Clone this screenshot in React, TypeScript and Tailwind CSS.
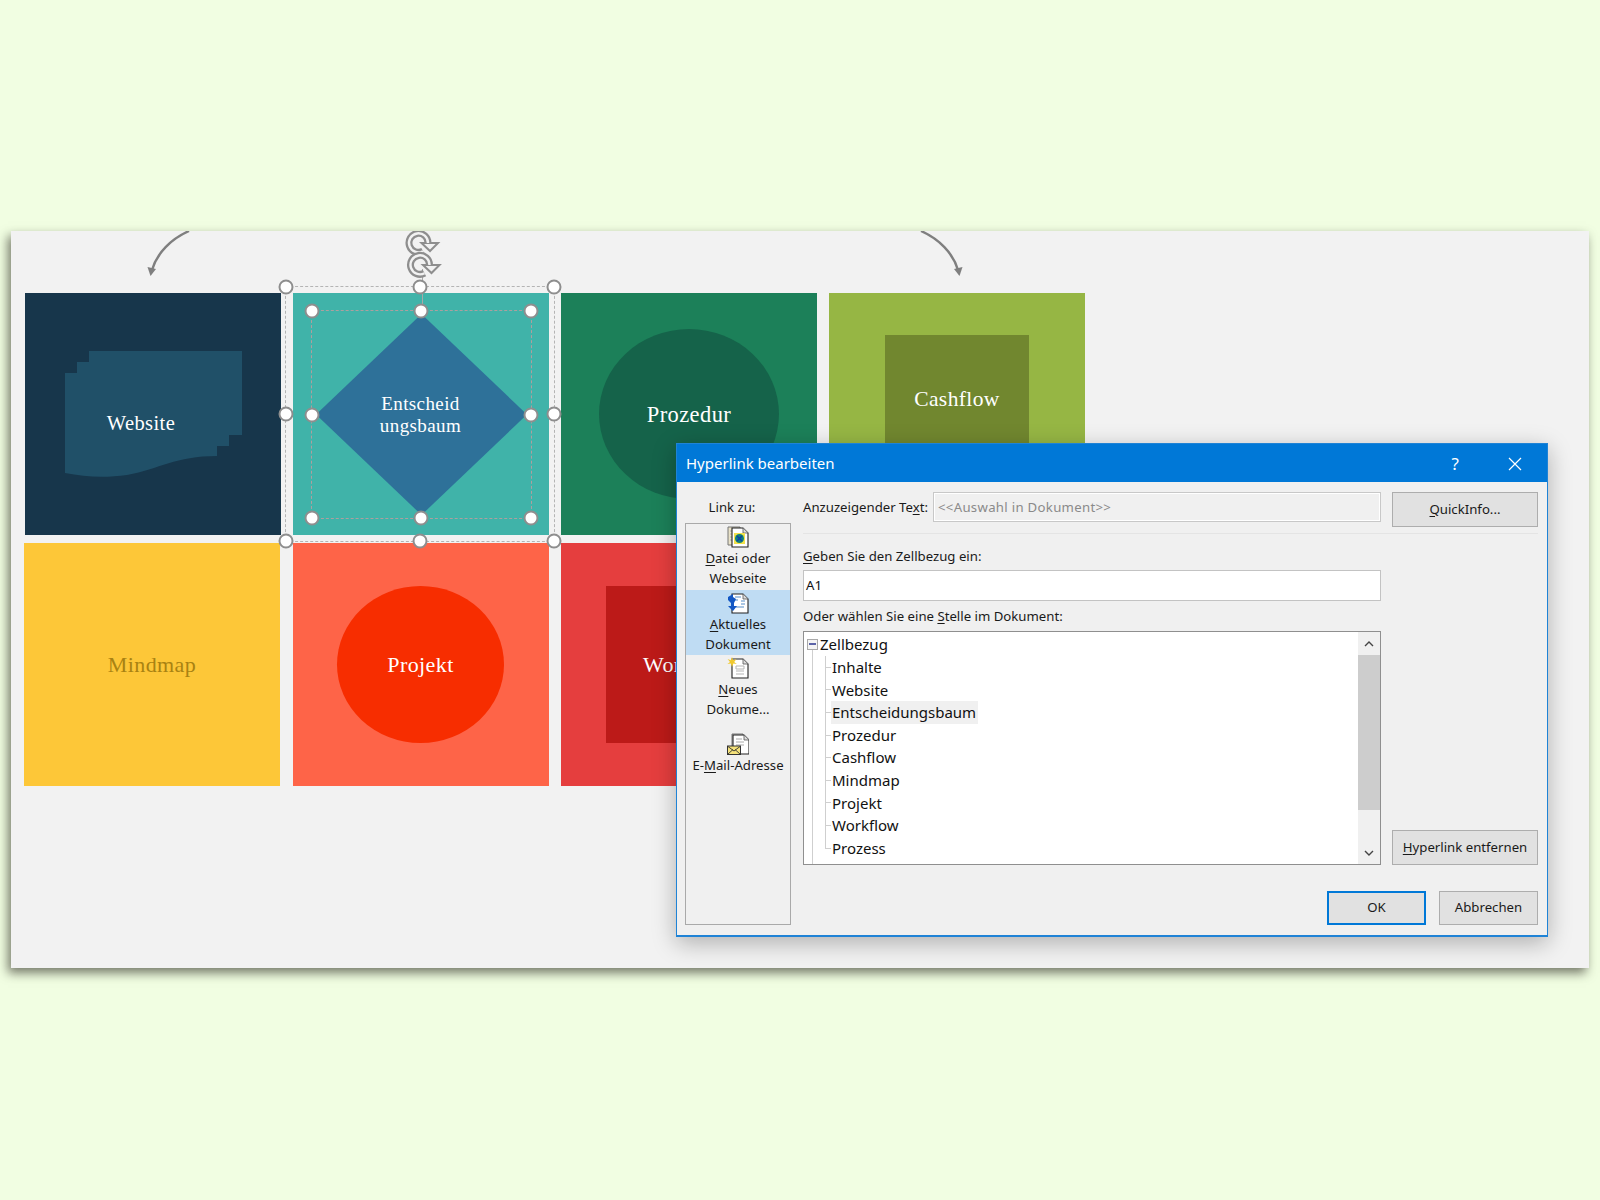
import type { ReactNode } from 'react';

const uiFont = "font-['Noto_Sans','Open_Sans',sans-serif]";
const serif = "font-['Liberation_Serif',serif] tracking-[0.4px]";
const tileText = `${serif} text-[22px] leading-[22px]`;

const HANDLE_SPOTS = [
  'left-0 top-0', 'left-1/2 top-0', 'left-full top-0',
  'left-0 top-1/2', 'left-full top-1/2',
  'left-0 top-full', 'left-1/2 top-full', 'left-full top-full',
];

function SelectionBox({ className }: { className: string }) {
  return (
    <div className={`absolute border border-dashed ${className}`}>
      {HANDLE_SPOTS.map((spot) => (
        <div
          key={spot}
          className={`absolute h-[15px] w-[15px] -translate-x-1/2 -translate-y-1/2 rounded-full border-[2.5px] border-[#8e8e8e] bg-white ${spot}`}
        />
      ))}
    </div>
  );
}

function RotateIcon({ cx, cy }: { cx: number; cy: number }) {
  const arc = `M${cx + 4.5} ${cy + 8.2}A9.5 9.5 0 1 1 ${cx + 9.5} ${cy}`;
  const head = `M${cx + 3} ${cy}H${cx + 19.500}L${cx + 11.500} ${cy + 8}Z`;
  return (
    <g fill="none">
      <path d={arc} stroke="#8e8e8e" strokeWidth="7" />
      <path d={head} fill="#f2f2f2" stroke="#8e8e8e" strokeWidth="2" />
      <path d={arc} stroke="#f2f2f2" strokeWidth="2.4" />
    </g>
  );
}

function CurvedArrow({ className, d, head }: { className: string; d: string; head: string }) {
  return (
    <svg className={`absolute ${className}`} width="48" height="50" viewBox="0 0 48 50">
      <path d={d} fill="none" stroke="#7f7f7f" strokeWidth="2.4" />
      <path d={head} fill="#7f7f7f" />
    </svg>
  );
}

function Tile({ className, children }: { className: string; children?: ReactNode }) {
  return <div className={`relative h-full w-[256px] shrink-0 ${className}`}>{children}</div>;
}

function Mn({ children }: { children: ReactNode }) {
  return <span className="underline underline-offset-2">{children}</span>;
}

function Btn({ className = 'border border-[#adadad]', children }: { className?: string; children: ReactNode }) {
  return (
    <button className={`flex items-center justify-center bg-[#e1e1e1] text-[13.2px] text-[#1a1a1a] ${className}`}>
      {children}
    </button>
  );
}

function PageShape({ x = 5 }: { x?: number }) {
  return (
    <>
      <path d={`M${x} 2h11l5 5v14H${x}z`} fill="#fff" stroke="#222" strokeWidth="1.1" />
      <path d={`M${x + 11} 2v5h5`} fill="#ddd" stroke="#555" strokeWidth="0.8" />
    </>
  );
}

function FileIcon() {
  return (
    <svg width="22" height="22" viewBox="0 0 22 22">
      <path d="M1 1h12v18H1z" fill="#e9e2c8" stroke="#777" strokeWidth="1" />
      <path d="M3 5h8M3 8h8M3 11h8M3 14h8" stroke="#aaa" strokeWidth="1" />
      <PageShape />
      <rect x="7" y="7" width="11" height="11" fill="#f3e24a" />
      <circle cx="12.5" cy="12.5" r="4.5" fill="#0f7f7a" />
      <path d="M10 10l5 5M15 10l-5 5" stroke="#0b3fa8" strokeWidth="1.4" />
    </svg>
  );
}

function CurrentDocIcon() {
  return (
    <svg width="22" height="22" viewBox="0 0 22 22">
      <PageShape />
      <path d="M8 5h6M8 8h3M14 9h4M14 12h4M9 15h8" stroke="#8db4dc" strokeWidth="1.4" />
      <path d="M1 5l5-3v3l3 2-2 4v3l3 0-4 5-5-5h3v-3L1 8z" fill="#1257c4" />
    </svg>
  );
}

function NewDocIcon() {
  return (
    <svg width="22" height="22" viewBox="0 0 22 22">
      <PageShape />
      <path d="M9 9h8v3H9zM9 14h8M9 17h8" fill="none" stroke="#b5b5b5" strokeWidth="1" />
      <path d="M5 0l1.2 3.200L9.500 2 7.200 5l2.600 2-3.400-.4L5 10 3.800 6.600.4 7l2.600-2L.6 2l3.200 1.200z" fill="#f0c92f" />
    </svg>
  );
}

function MailIcon() {
  return (
    <svg width="22" height="22" viewBox="0 0 22 22">
      <path d="M5 1h11v16H5z" fill="#eee" stroke="#777" strokeWidth="1" />
      <PageShape x={6} />
      <path d="M9 6h6M9 9h8M9 12h8" stroke="#aaa" strokeWidth="1" />
      <rect x="0.5" y="13" width="13" height="8.5" fill="#f5e27a" stroke="#333" strokeWidth="1" />
      <path d="M1 13.500l6 4.500 6-4.500M1 21l5-4.500M13 21l-5-4.500" fill="none" stroke="#333" strokeWidth="0.9" />
    </svg>
  );
}

function LinkItem({ icon, selected, single, lines }: { icon: ReactNode; selected?: boolean; single?: boolean; lines: ReactNode[] }) {
  return (
    <div className={`flex h-[65.5px] flex-col items-center ${single ? 'pt-[12px]' : 'pt-[2px]'} ${selected ? 'bg-[#bfdcf3]' : ''}`}>
      {icon}
      <div className="text-center text-[13.2px] leading-[20px] text-[#1a1a1a]">
        {lines.map((line, i) => <div key={i}>{line}</div>)}
      </div>
    </div>
  );
}

const TREE_ITEMS = ['Inhalte', 'Website', 'Entscheidungsbaum', 'Prozedur', 'Cashflow', 'Mindmap', 'Projekt', 'Workflow', 'Prozess'];

function DocTree() {
  return (
    <div className="relative flex h-[234px] w-[578px] border border-[#8f8f8f] bg-white">
      <div className="absolute left-[8px] top-[18px] bottom-0 w-px bg-[#cfcfcf]" />
      <div className="min-w-0 flex-1 pl-[3px] text-[15px] leading-[22.6px] text-[#111]">
        <div className="flex h-[24px] items-center">
          <span className="mr-[2px] flex h-[11px] w-[11px] items-center justify-center border border-[#a9a9a9] bg-[#f4f4f4]">
            <span className="h-[2px] w-[7px] bg-[#5c64a8]" />
          </span>
          <span>Zellbezug</span>
        </div>
        <div className="relative ml-[18px]">
          <div className="absolute left-0 top-0 bottom-[11px] w-px bg-[#cfcfcf]" />
          {TREE_ITEMS.map((item) => (
            <div key={item} className="flex h-[22.6px] items-center">
              <span className="h-px w-[6px] shrink-0 bg-[#cfcfcf]" />
              <span className={item === 'Entscheidungsbaum' ? 'bg-[#f0f0f0] pl-px pr-[2px]' : 'pl-px'}>{item}</span>
            </div>
          ))}
        </div>
      </div>
      <div className="flex w-[22px] shrink-0 flex-col bg-[#f0f0f0]">
        <div className="flex h-[23px] items-center justify-center">
          <svg width="10" height="6" viewBox="0 0 10 6"><path d="M1 5l4-4 4 4" fill="none" stroke="#444" strokeWidth="1.4" /></svg>
        </div>
        <div className="h-[155px] bg-[#cdcdcd]" />
        <div className="mt-auto flex h-[23px] items-center justify-center">
          <svg width="10" height="6" viewBox="0 0 10 6"><path d="M1 1l4 4 4-4" fill="none" stroke="#444" strokeWidth="1.4" /></svg>
        </div>
      </div>
    </div>
  );
}

function HyperlinkDialog() {
  return (
    <div className={`absolute left-[665px] top-[212px] z-20 flex h-[494px] w-[872px] flex-col border border-b-2 border-[#1f83d6] bg-[#f0f0f0] shadow-[0_6px_22px_rgba(0,0,0,0.28)] ${uiFont}`}>
      <div className="flex h-[38px] shrink-0 items-center bg-[#0078d7] pl-[9px] pt-px text-white">
        <span className="text-[15px]">Hyperlink bearbeiten</span>
        <span className="ml-auto text-[17px]">?</span>
        <svg className="ml-[49px] mr-[25px]" width="14" height="14" viewBox="0 0 14 14">
          <path d="M1 1l12 12M13 1L1 13" stroke="#fff" strokeWidth="1.2" />
        </svg>
      </div>
      <div className="flex min-h-0 flex-1 pl-[8px] pr-[9px] pt-[10px]">
        <div className="flex w-[106px] shrink-0 flex-col">
          <div className="flex h-[31px] shrink-0 items-start justify-center pr-[12px] pt-[5px] text-[13.2px] leading-[20px] text-[#1a1a1a]">Link zu:</div>
          <div className="h-[402px] border border-[#a9a9a9] bg-[#f0f0f0]">
            <LinkItem icon={<FileIcon />} lines={[<><Mn>D</Mn>atei oder</>, 'Webseite']} />
            <LinkItem icon={<CurrentDocIcon />} selected lines={[<><Mn>A</Mn>ktuelles</>, 'Dokument']} />
            <LinkItem icon={<NewDocIcon />} lines={[<><Mn>N</Mn>eues</>, 'Dokume...']} />
            <LinkItem icon={<MailIcon />} single lines={[<>E-<Mn>M</Mn>ail-Adresse</>]} />
          </div>
        </div>
        <div className="ml-[12px] flex min-w-0 flex-1 flex-col">
          <div className="flex h-[35px] shrink-0 items-start">
            <div className="flex w-[578px] items-start">
              <span className="w-[130px] shrink-0 whitespace-nowrap pt-[5px] text-[13.2px] leading-[20px] text-[#1a1a1a]">Anzuzeigender Te<Mn>x</Mn>t:</span>
              <div className="flex h-[30px] flex-1 items-center border border-[#c8c8c8] bg-[#f0f0f0] pl-[4px] pt-px text-[13.2px] tracking-[0.3px] text-[#8a8a8a] shadow-[inset_0_0_0_1px_#fff]">
                {'<<Auswahl in Dokument>>'}
              </div>
            </div>
            <Btn className="ml-[11px] h-[35px] w-[146px] border border-[#adadad]"><span><Mn>Q</Mn>uickInfo...</span></Btn>
          </div>
          <div className="mt-[6px] h-px shrink-0 bg-[#e4e4e4]" />
          <div className="flex min-h-0 flex-1">
            <div className="w-[578px] shrink-0">
              <div className="mt-[12px] text-[13.2px] leading-[20px] text-[#1a1a1a]"><Mn>G</Mn>eben Sie den Zellbezug ein:</div>
              <div className="mt-[4px] flex h-[31px] items-center border border-[#c3c3c3] bg-white pl-[2px] text-[13.2px] text-[#111]">A1</div>
              <div className="mt-[5px] text-[13.2px] leading-[20px] text-[#1a1a1a]">Oder wählen Sie eine <Mn>S</Mn>telle im Dokument:</div>
              <div className="mt-[5px]"><DocTree /></div>
            </div>
            <div className="ml-[11px] flex h-[331px] w-[146px] shrink-0 items-end">
              <Btn className="h-[35px] w-full border border-[#adadad]"><span><Mn>H</Mn>yperlink entfernen</span></Btn>
            </div>
          </div>
          <div className="mb-[10px] flex shrink-0 justify-end gap-[13px]">
            <Btn className="h-[34px] w-[99px] border-2 border-[#0078d7]">OK</Btn>
            <Btn className="h-[34px] w-[99px] border border-[#adadad]">Abbrechen</Btn>
          </div>
        </div>
      </div>
    </div>
  );
}

export default function App() {
  return (
    <div className="h-[1200px] w-[1600px] bg-[#f1fee2] pl-[11px] pt-[231px]">
      <div className="relative h-[737px] w-[1578px] bg-[#f2f2f2] shadow-[-3px_5px_10px_rgba(50,50,40,0.65)]">
        <div className="absolute inset-0 overflow-hidden">
          <div className="flex h-full flex-col pt-[62px]">
            <CurvedArrow className="left-[136px] top-0" d="M42 0C24 8 10 22 5 39" head="M0.5 36l8.5 2-5.5 7z" />
            <CurvedArrow className="left-[904px] top-0" d="M6 0C24 8 38 22 43 39" head="M47.5 36l-8.5 2 5.500 7z" />
            <div className="flex h-[242px] pl-[14px]">
              <Tile className="bg-[#17364b]">
                <svg className="absolute left-[40px] top-[58px]" width="177" height="126" viewBox="0 0 177 126">
                  <path d="M24 0H177V84H164V95H152V105C110 105 95 118 62 124C40 127 20 126 0 122V22H12V11H24Z" fill="#205068" />
                </svg>
                <div className={`absolute left-[116px] top-[119px] -translate-x-1/2 whitespace-nowrap text-[20.5px] leading-[22px] text-white ${serif}`}>Website</div>
              </Tile>
              <Tile className="z-10 ml-[11.5px] bg-[#40b3a9]">
                <svg className="absolute left-[23.5px] top-[20.500px]" width="211" height="201" viewBox="0 0 211 201">
                  <path d="M0 100.500L105.500 0 211 100.500 105.500 201Z" fill="#2e7199" />
                </svg>
                <div className={`absolute inset-x-0 top-[100px] text-center text-[19px] leading-[21.5px] text-white ${serif}`}>Entscheid<br />ungsbaum</div>
                <div className="absolute left-[129px] top-[-24px] h-[41px] w-px bg-[#a8a8a8]" />
                <SelectionBox className="left-[-8px] top-[-7px] h-[256px] w-[270px] border-[#b4b4b4]" />
                <SelectionBox className="left-[18px] top-[17px] h-[209px] w-[221px] border-[#ad9f9f]" />
                <svg className="absolute left-[112px] top-[-62px]" width="42" height="56" viewBox="0 0 42 56">
                  <RotateIcon cx={13.5} cy={12} />
                  <RotateIcon cx={15} cy={34} />
                </svg>
              </Tile>
              <Tile className="ml-[12.5px] flex items-center justify-center bg-[#1c8059]">
                <div className={`flex h-[170px] w-[180px] items-center justify-center rounded-[50%] bg-[#15634a] pt-px text-[22.5px] leading-[22px] text-white ${serif}`}>Prozedur</div>
              </Tile>
              <Tile className="ml-[12px] bg-[#96b644]">
                <div className={`absolute left-[56px] top-[42px] flex h-[128px] w-[144px] items-center justify-center bg-[#71872f] text-[21.5px] leading-[22px] text-white ${serif}`}>Cashflow</div>
              </Tile>
            </div>
            <div className="mt-[8px] flex h-[243px] pl-[13px]">
              <Tile className={`flex items-center justify-center bg-[#fdc738] text-[#a98212] ${tileText}`}>Mindmap</Tile>
              <Tile className="ml-[12.5px] flex items-center justify-center bg-[#fe6448]">
                <div className={`flex h-[157px] w-[167px] items-center justify-center rounded-[50%] bg-[#f72d00] text-white ${tileText}`}>Projekt</div>
              </Tile>
              <Tile className="ml-[12.5px] flex items-center justify-center bg-[#e53e3e]">
                <div className={`flex h-[157px] w-[166px] items-center justify-center bg-[#bc1a18] text-white ${tileText}`}>Workflow</div>
              </Tile>
            </div>
          </div>
        </div>
        <HyperlinkDialog />
      </div>
    </div>
  );
}
